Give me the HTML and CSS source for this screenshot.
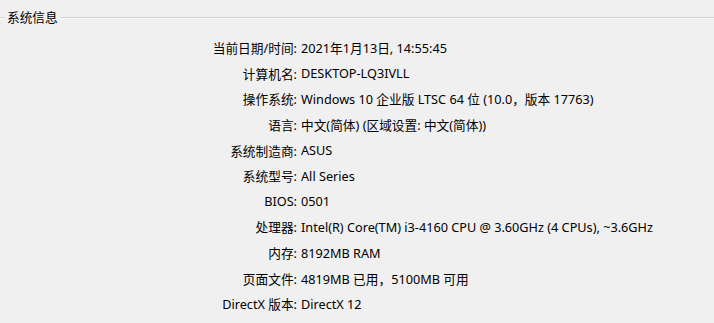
FILE: index.html
```html
<!DOCTYPE html>
<html lang="zh-CN">
<head>
    <meta charset="UTF-8">
    <title>系统信息</title>
    <link rel="stylesheet" href="styles.css">
</head>
<body>
    <div class="group">
        <div class="group-head">
            <span class="head-line short"></span>
            <span class="group-title">系统信息</span>
            <span class="head-line"></span>
        </div>

        <div class="info-grid">
            <div class="label">当前日期/时间:</div>
            <div class="value">2021年1月13日, 14:55:45</div>

            <div class="label">计算机名:</div>
            <div class="value">DESKTOP-LQ3IVLL</div>

            <div class="label">操作系统:</div>
            <div class="value">Windows 10 企业版 LTSC 64 位 (10.0，版本 17763)</div>

            <div class="label">语言:</div>
            <div class="value">中文(简体) (区域设置: 中文(简体))</div>

            <div class="label">系统制造商:</div>
            <div class="value">ASUS</div>

            <div class="label">系统型号:</div>
            <div class="value">All Series</div>

            <div class="label">BIOS:</div>
            <div class="value">0501</div>

            <div class="label">处理器:</div>
            <div class="value">Intel(R) Core(TM) i3-4160 CPU @ 3.60GHz (4 CPUs), ~3.6GHz</div>

            <div class="label">内存:</div>
            <div class="value">8192MB RAM</div>

            <div class="label">页面文件:</div>
            <div class="value">4819MB 已用，5100MB 可用</div>

            <div class="label">DirectX 版本:</div>
            <div class="value">DirectX 12</div>
        </div>
    </div>
</body>
</html>
```

FILE: styles.css
```css
body {
    margin: 0;
    background-color: #f0f0f0;
    color: #000;
    font-family: "Noto Sans", "Noto Sans CJK SC", sans-serif;
    font-size: 12.7px;
}
.group {
    height: 323px;
    overflow: hidden;
}
.group-head {
    display: flex;
    align-items: center;
    height: 34px;
}
.head-line {
    flex: 1;
    height: 1px;
    background-color: #d5d5d5;
    box-shadow: 0 1px 0 #f8f8f8;
}
.head-line.short {
    flex: none;
    width: 5px;
}
.group-title {
    padding: 0 3px 0 2px;
    line-height: 16px;
}
.info-grid {
    display: grid;
    grid-template-columns: 297px auto;
    grid-auto-rows: 25.6px;
    column-gap: 4px;
    align-items: center;
    padding-top: 1px;
}
.label {
    text-align: right;
    white-space: nowrap;
}
.value {
    white-space: nowrap;
}
```
